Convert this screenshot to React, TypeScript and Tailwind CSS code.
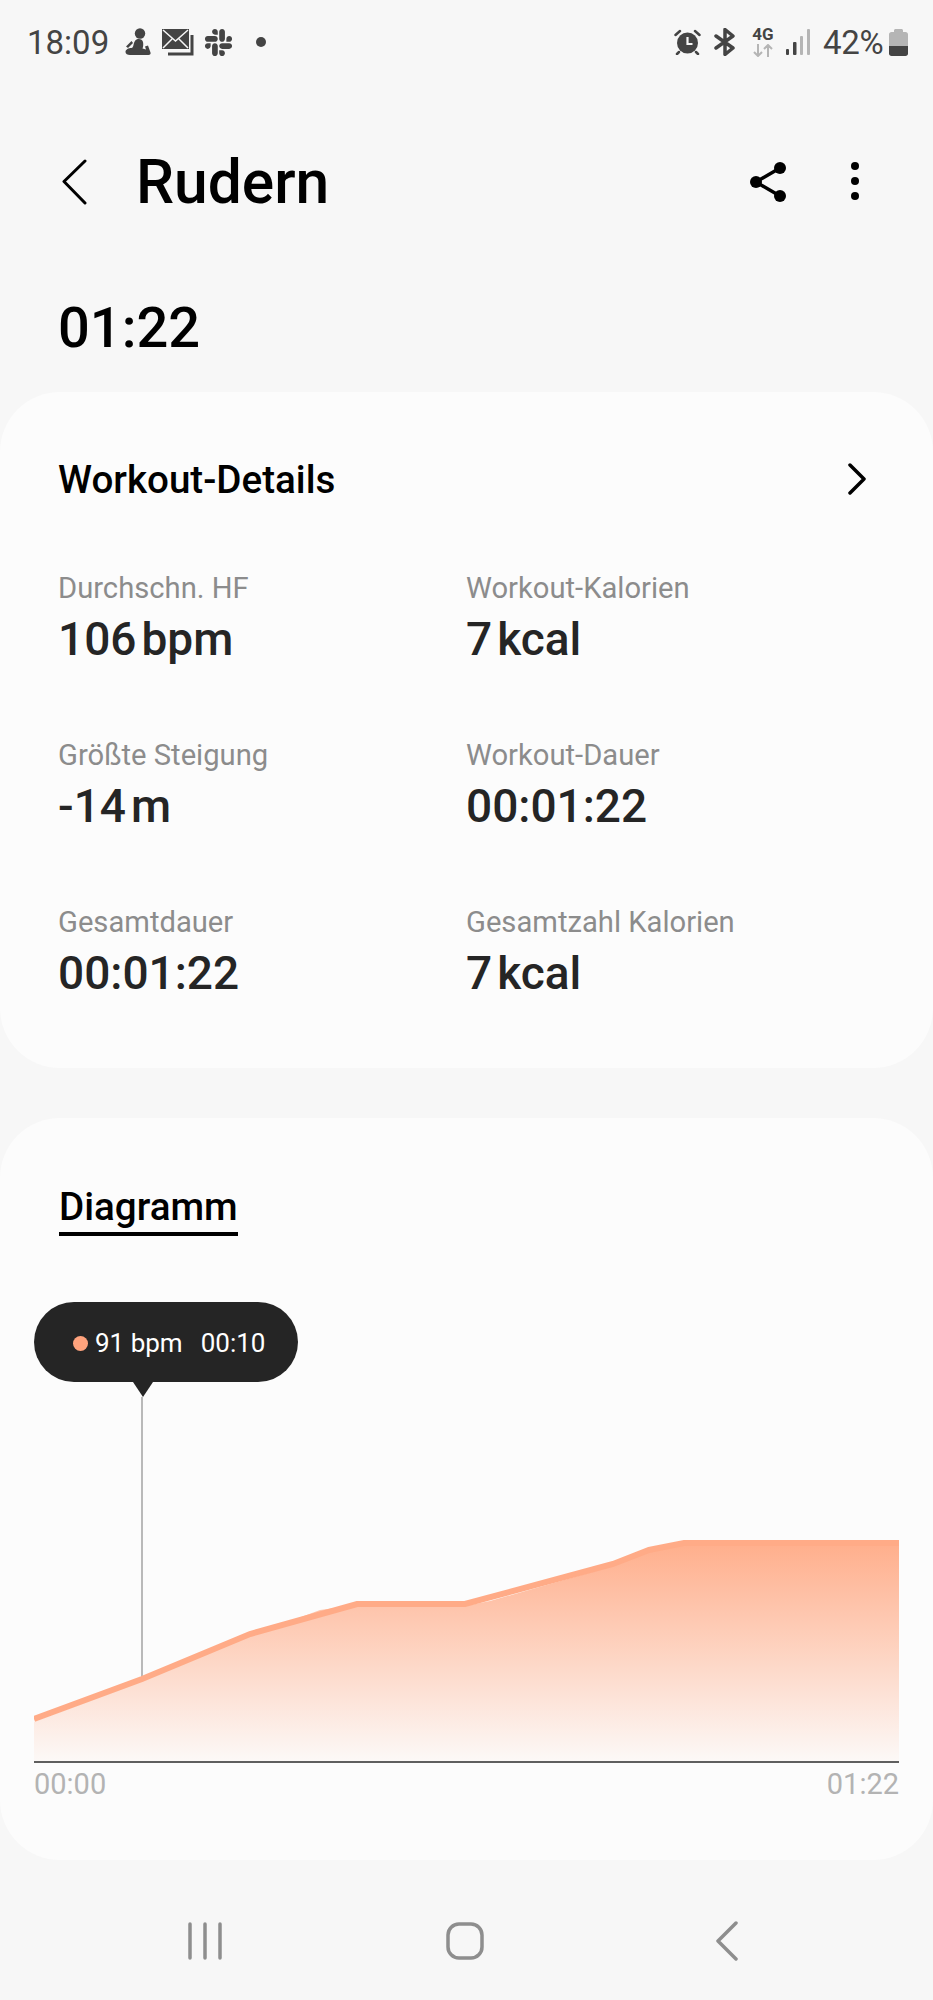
import React from "react";
import { FaSlack } from "react-icons/fa";

function StatusLeft() {
  return (
    <div className="flex items-center">
      <span className="w-[98px] text-[33px] leading-none text-[#444444]">18:09</span>
      <svg width="26" height="28" viewBox="0 0 26 28" className="mr-[11px]">
        <circle cx="15" cy="5.500" r="5.200" fill="#444" />
        <path d="M11.500 11.500c3-1 6 0 6.500 2.500.5 2.500.2 5-.5 6.500l3.500 1-1-3 3-1 2.500 7c.5 1.500-.5 2.500-2 2.500L5 27c-2.500 0-4.500-1-4.500-3 0-2.500 3-4 6-4 1-.2 1.500-1 2-3 .4-2 1-4.500 3-5.500z" fill="#444" />
        <path d="M1 18.500L6.500 13l1.500 2-5 5z" fill="#444" />
      </svg>
      <svg width="32" height="27" viewBox="0 0 32 27" className="mr-[9px]">
        <path d="M0 0h27v20H0z" fill="#444" />
        <path d="M1 1l12.500 11L26 1M1 19l9-9M26 19l-9-9" fill="none" stroke="#f7f7f7" strokeWidth="1.500" />
        <path d="M30 6v19H6" fill="none" stroke="#444" strokeWidth="3" />
      </svg>
      <FaSlack size={31} color="#444444" />
      <span className="ml-[22px] h-[10px] w-[10px] rounded-full bg-[#444444]" />
    </div>
  );
}

function StatusRight() {
  return (
    <div className="flex items-center">
      <svg width="27" height="26" viewBox="0 0 27 26" className="mr-[12px]">
        <circle cx="13.500" cy="14" r="10.500" fill="#444" />
        <path d="M13.500 8v7h5" fill="none" stroke="#f7f7f7" strokeWidth="2.200" />
        <path d="M1.500 6L6 2M25.500 6L21 2M5 23l-2 2M22 23l2 2" stroke="#444" strokeWidth="2.500" strokeLinecap="round" />
      </svg>
      <svg width="24" height="28" viewBox="0 0 24 28" className="mr-[15px]">
        <path d="M3 8l17 12-8 6.500V1.500L20 8 3 20" fill="none" stroke="#444" strokeWidth="3.500" strokeLinejoin="round" strokeLinecap="round" />
      </svg>
      <div className="mr-[12px] flex w-[22px] flex-col items-center">
        <span className="text-[17px] font-bold leading-[13px] text-[#444444]">4G</span>
        <svg width="22" height="13" viewBox="0 0 22 13" className="mt-[3px]">
          <path d="M6 0v12M2 8l4 4 4-4M16 13V1M12 5l4-4 4 4" fill="none" stroke="#b5b5b5" strokeWidth="2" />
        </svg>
      </div>
      <svg width="25" height="26" viewBox="0 0 25 26" className="mr-[12px]">
        <rect x="0" y="20" width="3" height="6" rx="1" fill="#444" />
        <rect x="7" y="13" width="3.500" height="13" rx="1" fill="#444" />
        <rect x="14" y="7" width="3" height="19" rx="1" fill="#b5b5b5" />
        <rect x="21" y="0" width="3" height="26" rx="1" fill="#b5b5b5" />
      </svg>
      <span className="w-[66px] text-[33px] leading-none tracking-[-0.3px] text-[#444444]">42%</span>
      <svg width="19" height="27" viewBox="0 0 19 27">
        <path d="M5 3V1.500C5 .7 5.700 0 6.500 0h6c.8 0 1.500.7 1.500 1.500V3h2.500C18 3 19 4 19 5.500V17H0V5.500C0 4 1 3 2.500 3z" fill="#b5b5b5" />
        <path d="M0 17h19v7.500c0 1.500-1 2.500-2.500 2.500h-14C1 27 0 26 0 24.500z" fill="#444" />
      </svg>
    </div>
  );
}

function Metric({ label, value, unit }: { label: string; value: string; unit?: string }) {
  return (
    <div className="h-[167px]">
      <div className="h-[40px] text-[29.200px] leading-[40px] text-[#8c8c8c]">{label}</div>
      <div className="mt-[1px] h-[60px] text-[46px] font-medium leading-[60px] text-[#252525]">
        {value}
        {unit ? <span className="ml-[5px]">{unit}</span> : null}
      </div>
    </div>
  );
}

function Chart() {
  const line = "34,1719 142,1679 250,1634 357,1604 465,1604 613,1564 649,1550 684,1543 899,1543";
  const area = "34,1722 142,1681 250,1636 320,1610 357,1605 470,1605 490,1601 613,1566 649,1552 684,1541 899,1541 899,1762 34,1762";
  return (
    <svg width="865" height="366" viewBox="34 1397 865 366" className="block">
      <defs>
        <linearGradient id="fillGrad" x1="0" y1="1541" x2="0" y2="1762" gradientUnits="userSpaceOnUse">
          <stop offset="0" stopColor="#ffae8b" />
          <stop offset="1" stopColor="#ffae8b" stopOpacity="0.04" />
        </linearGradient>
        <clipPath id="plot">
          <rect x="34" y="1397" width="865" height="366" />
        </clipPath>
      </defs>
      <line x1="142" y1="1397" x2="142" y2="1678" stroke="#777777" strokeWidth="1" />
      <polygon points={area} fill="url(#fillGrad)" />
      <polyline points={line} fill="none" stroke="#ffab87" strokeWidth="6" clipPath="url(#plot)" />
      <line x1="34" y1="1762" x2="899" y2="1762" stroke="#5f5f5f" strokeWidth="2" />
    </svg>
  );
}

export default function App() {
  return (
    <div className="flex h-[2000px] w-[933px] flex-col overflow-hidden bg-[#f7f7f7] font-['Roboto',sans-serif]">
      <div className="flex h-[84px] items-center justify-between pl-[27px] pr-[25px]">
        <StatusLeft />
        <StatusRight />
      </div>

      <div className="flex h-[198px] items-center pl-[62px] pr-[74px]">
        <svg width="25" height="46" viewBox="0 0 25 46" className="mt-[-2px]">
          <path d="M23 2L2 22.500 23 44" fill="none" stroke="#000" strokeWidth="3" strokeLinecap="round" strokeLinejoin="round" />
        </svg>
        <span className="ml-[49px] text-[60.500px] font-medium leading-none text-black">Rudern</span>
        <svg width="36" height="40" viewBox="0 0 36 40" className="ml-auto mt-[-3px]">
          <path d="M30 6L6 20l24 14" fill="none" stroke="#000" strokeWidth="3.500" />
          <circle cx="30" cy="6" r="6" fill="#000" />
          <circle cx="6" cy="20" r="6" fill="#000" />
          <circle cx="30" cy="34" r="6" fill="#000" />
        </svg>
        <div className="ml-[65px] mt-[-4px] flex h-[38px] flex-col justify-between">
          <span className="h-[8px] w-[8px] rounded-full bg-black" />
          <span className="h-[8px] w-[8px] rounded-full bg-black" />
          <span className="h-[8px] w-[8px] rounded-full bg-black" />
        </div>
      </div>

      <div className="h-[110px] pl-[58px] pt-[14px] text-[56px] font-medium leading-[64px] text-black">01:22</div>

      <section className="h-[676px] rounded-[60px] bg-[#fcfcfc] px-[58px]">
        <div className="flex h-[176px] items-center justify-between">
          <span className="text-[38.600px] font-medium leading-none text-black">Workout-Details</span>
          <svg width="20" height="32" viewBox="0 0 20 32" className="mr-[8px] mt-[-2px]">
            <path d="M3 2l14 14L3 30" fill="none" stroke="#000" strokeWidth="3.500" strokeLinecap="round" strokeLinejoin="round" />
          </svg>
        </div>
        <div className="grid grid-cols-[408px_1fr]">
          <Metric label="Durchschn. HF" value="106" unit="bpm" />
          <Metric label="Workout-Kalorien" value="7" unit="kcal" />
          <Metric label="Größte Steigung" value="-14" unit="m" />
          <Metric label="Workout-Dauer" value="00:01:22" />
          <Metric label="Gesamtdauer" value="00:01:22" />
          <Metric label="Gesamtzahl Kalorien" value="7" unit="kcal" />
        </div>
      </section>

      <section className="mt-[50px] h-[742px] rounded-[60px] bg-[#fcfcfc] px-[34px]">
        <div className="pl-[25px] pt-[66px]">
          <span className="inline-block border-b-[4px] border-black pb-[2px] text-[38.600px] font-medium leading-[46px] text-black">Diagramm</span>
        </div>
        <div className="relative mt-[66px] flex h-[80px] w-[264px] items-center rounded-[40px] bg-[#252525] pl-[39px] pt-[2px] text-[26px] text-white">
          <span className="h-[15px] w-[15px] rounded-full bg-[#ffa37d]" />
          <span className="ml-[7px]">91 bpm</span>
          <span className="ml-[18px]">00:10</span>
          <span className="absolute left-[99px] top-[80px] h-0 w-0 border-x-[10px] border-t-[15px] border-x-transparent border-t-[#252525]" />
        </div>
        <div className="mt-[15px]">
          <Chart />
        </div>
        <div className="flex justify-between pt-[1px] text-[29px] leading-[40px] text-[#b3b3b3]">
          <span>00:00</span>
          <span>01:22</span>
        </div>
      </section>

      <div className="flex flex-1 items-center pt-[22px]">
        <div className="flex w-[933px] items-center pl-[188px]">
          <svg width="35" height="38" viewBox="0 0 35 38">
            <path d="M2 2v34M17 2v34M32 2v34" stroke="#8e8e8e" strokeWidth="3.500" strokeLinecap="round" />
          </svg>
          <svg width="38" height="38" viewBox="0 0 38 38" className="ml-[223px]">
            <rect x="2" y="2" width="34" height="34" rx="11" fill="none" stroke="#8e8e8e" strokeWidth="3.500" />
          </svg>
          <svg width="24" height="40" viewBox="0 0 24 40" className="ml-[231px]">
            <path d="M21 2L3 20l18 18" fill="none" stroke="#8e8e8e" strokeWidth="3.500" strokeLinecap="round" strokeLinejoin="round" />
          </svg>
        </div>
      </div>
    </div>
  );
}
